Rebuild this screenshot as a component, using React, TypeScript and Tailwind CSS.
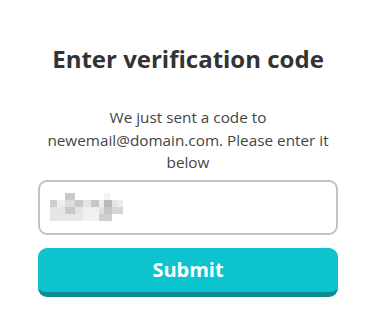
const MOSAIC: [number, string][][] = [
  [[15, "#ffffff"], [10, "#c9c9c9"], [29, "#ffffff"], [6, "#f3f3f3"], [13, "#ffffff"]],
  [[7, "#cfcfcf"], [8, "#efefef"], [10, "#dcdcdc"], [8, "#c9c9c9"], [8, "#e4e4e4"], [8, "#c7c7c7"], [5, "#ececec"], [8, "#b9b9b9"], [5, "#e4e4e4"], [6, "#ebebeb"]],
  [[15, "#e6e6e6"], [10, "#c8c8c8"], [8, "#e3e3e3"], [16, "#efefef"], [5, "#e0e0e0"], [8, "#c4c4c4"], [11, "#d5d5d5"]],
  [[33, "#e6e6e6"], [16, "#f1f1f1"], [13, "#cfcfcf"], [11, "#ffffff"]],
];

export default function App() {
  return (
    <div className="min-h-screen bg-white pt-[42px]" style={{ fontFamily: "'Open Sans', 'Noto Sans', sans-serif" }}>
      <div className="ml-[38px] flex w-[300px] flex-col items-center">
        <h1 className="text-[24px] font-bold leading-[34px] text-[#333333]">Enter verification code</h1>

        <p className="mt-[30px] text-center text-[15.3px] leading-[22.5px] text-[#444444]">
          We just sent a code to newemail@domain.com. Please enter it below
        </p>

        {/* code field, value is pixelated in the shot */}
        <div className="mt-[6px] flex h-[55px] w-full items-center rounded-[9px] border-2 border-[#c2c2c2] px-[10px]">
          <div className="flex flex-col">
            {MOSAIC.map((row, i) => (
              <div key={i} className="flex h-[7px]">
                {row.map(([w, c], j) => (
                  <div key={j} className="h-full" style={{ width: w, backgroundColor: c }} />
                ))}
              </div>
            ))}
          </div>
        </div>

        <button className="mt-[13px] h-[49px] w-full rounded-[9px] border-b-[5px] border-[#0a8b92] bg-[#0cc3ce] text-[20px] font-bold text-white">
          Submit
        </button>
      </div>
    </div>
  );
}
